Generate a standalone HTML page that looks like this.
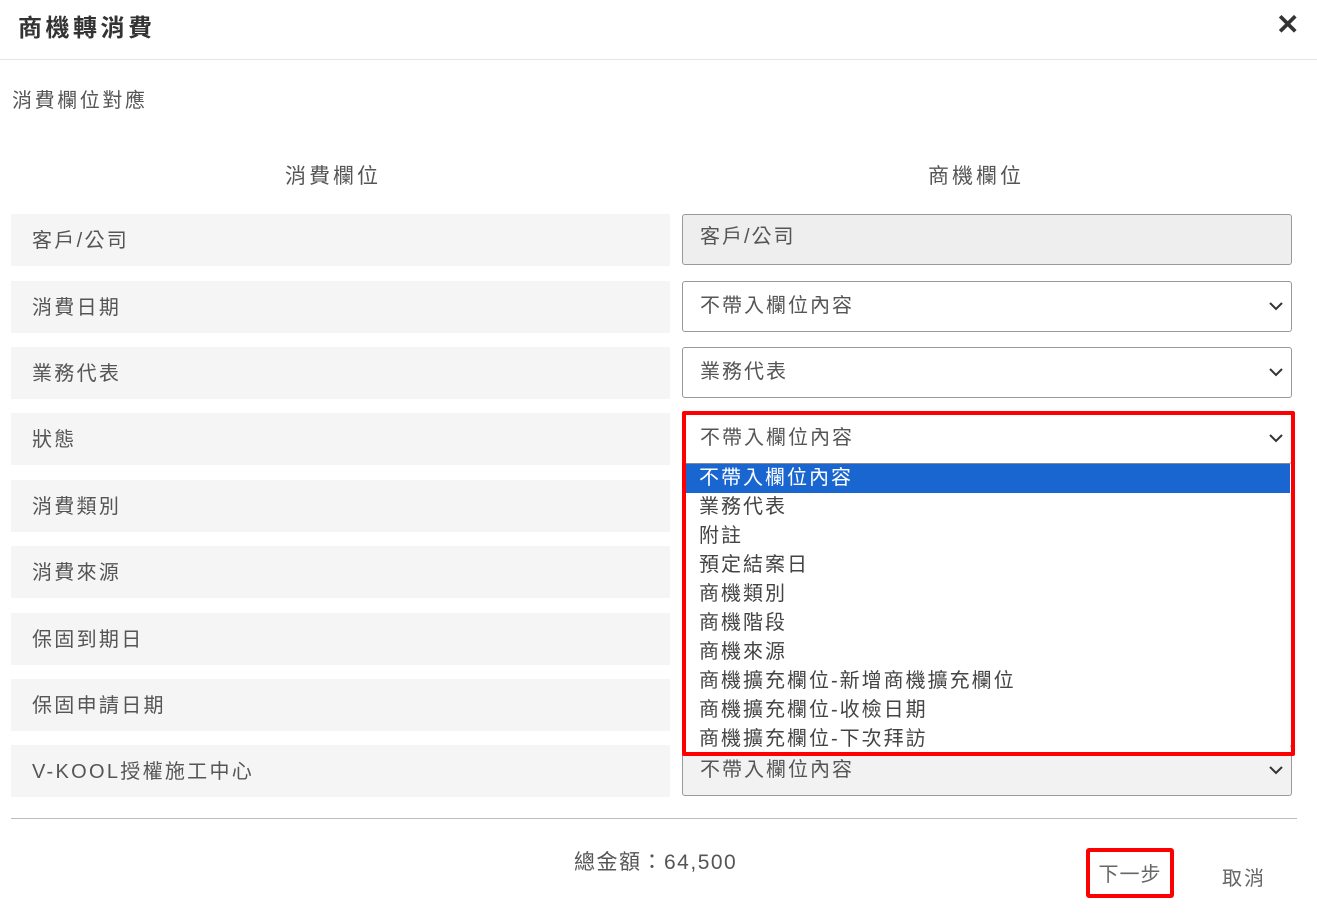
<!DOCTYPE html>
<html><head><meta charset="utf-8"><style>
*{margin:0;padding:0;box-sizing:border-box}
body{width:1317px;height:913px;background:#fff;font-family:"Liberation Sans","Noto Sans CJK TC",sans-serif;color:#555;position:relative;overflow:hidden;letter-spacing:2px}
.a{position:absolute}
.lab{position:absolute;left:11px;width:659px;height:52px;background:#f5f5f5;font-size:20px;line-height:54px;padding-left:21px;color:#555;letter-spacing:2.3px}
.sel{position:absolute;left:682px;width:610px;height:51px;border:1px solid #999;border-radius:3px;background:#fff;font-size:20px;line-height:49px;padding-left:17px;color:#555}
.sel svg{position:absolute;right:8px;top:19px}
.it{height:29px;line-height:29px;font-size:20px;padding-left:13px;color:#444}
</style></head><body>
<div class="a" style="left:18px;top:8px;font-size:24px;font-weight:bold;color:#333;letter-spacing:3.5px">商機轉消費</div>
<div class="a" style="left:1276px;top:8px;font-size:28px;font-weight:bold;color:#333">✕</div>
<div class="a" style="left:0;top:59px;width:1317px;height:1px;background:#e6e6e6"></div>
<div class="a" style="left:12px;top:84px;font-size:20px;letter-spacing:2.6px">消費欄位對應</div>
<div class="a" style="left:285px;top:160px;font-size:21px;letter-spacing:3px">消費欄位</div>
<div class="a" style="left:928px;top:160px;font-size:21px;letter-spacing:3px">商機欄位</div>

<div class="lab" style="top:214px">客戶/公司</div>
<div class="lab" style="top:281px">消費日期</div>
<div class="lab" style="top:347px">業務代表</div>
<div class="lab" style="top:413px">狀態</div>
<div class="lab" style="top:480px">消費類別</div>
<div class="lab" style="top:546px">消費來源</div>
<div class="lab" style="top:613px">保固到期日</div>
<div class="lab" style="top:679px">保固申請日期</div>
<div class="lab" style="top:745px">V-KOOL授權施工中心</div>

<div class="sel" style="top:214px;background:#eee;line-height:44px">客戶/公司</div>
<div class="sel" style="top:281px">不帶入欄位內容<svg width="14" height="10" viewBox="0 0 14 10"><path d="M1 2l6 6 6-6" stroke="#333" stroke-width="2" fill="none"/></svg></div>
<div class="sel" style="top:347px">業務代表<svg width="14" height="10" viewBox="0 0 14 10"><path d="M1 2l6 6 6-6" stroke="#333" stroke-width="2" fill="none"/></svg></div>
<div class="sel" style="top:413px">不帶入欄位內容<svg width="14" height="10" viewBox="0 0 14 10"><path d="M1 2l6 6 6-6" stroke="#333" stroke-width="2" fill="none"/></svg></div>
<div class="sel" style="top:745px;background:#f2f2f2">不帶入欄位內容<svg width="14" height="10" viewBox="0 0 14 10"><path d="M1 2l6 6 6-6" stroke="#333" stroke-width="2" fill="none"/></svg></div>

<div class="a" style="left:686px;top:463px;width:604px;height:290px;background:#fff;border-top:1px solid #888">
<div class="it" style="background:#1a66d0;color:#fff">不帶入欄位內容</div>
<div class="it">業務代表</div><div class="it">附註</div><div class="it">預定結案日</div><div class="it">商機類別</div><div class="it">商機階段</div><div class="it">商機來源</div><div class="it">商機擴充欄位-新增商機擴充欄位</div><div class="it">商機擴充欄位-收檢日期</div><div class="it">商機擴充欄位-下次拜訪</div>
</div>
<div class="a" style="left:682px;top:411px;width:613px;height:345px;border:4px solid #f00;border-radius:2px"></div>

<div class="a" style="left:11px;top:818px;width:1286px;height:1px;background:#bbb"></div>
<div class="a" style="left:574px;top:846px;font-size:21px;color:#555;letter-spacing:1.5px">總金額：64,500</div>
<div class="a" style="left:1086px;top:848px;width:88px;height:50px;border:4px solid #f00;border-radius:3px;font-size:20px;line-height:46px;text-align:center;color:#666;letter-spacing:1px">下一步</div>
<div class="a" style="left:1222px;top:862px;font-size:20px;color:#666">取消</div>
</body></html>
